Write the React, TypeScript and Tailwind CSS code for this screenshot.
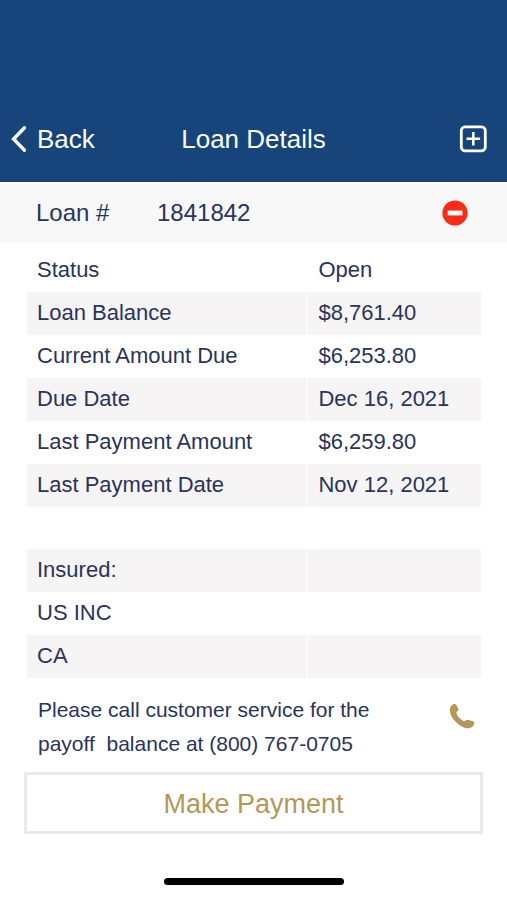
interface DetailRow {
	label: string;
	value?: string;
}

const loanRows: DetailRow[] = [
	{ label: "Status", value: "Open" },
	{ label: "Loan Balance", value: "$8,761.40" },
	{ label: "Current Amount Due", value: "$6,253.80" },
	{ label: "Due Date", value: "Dec 16, 2021" },
	{ label: "Last Payment Amount", value: "$6,259.80" },
	{ label: "Last Payment Date", value: "Nov 12, 2021" },
];

const insuredRows: DetailRow[] = [
	{ label: "Insured:" },
	{ label: "US INC" },
	{ label: "CA" },
];

function IconBack() {
	return (
		<svg width="16" height="28" viewBox="0 0 16 28" fill="none" aria-hidden="true">
			<path
				d="M14.5 2.8 3.6 14 14.5 25.2"
				stroke="currentColor"
				strokeWidth="3.4"
				strokeLinecap="round"
			/>
		</svg>
	);
}

function IconAddBox() {
	return (
		<svg width="28" height="28" viewBox="0 0 28 28" fill="none" aria-hidden="true">
			<rect x="2.3" y="1.8" width="24" height="24" rx="3.8" stroke="currentColor" strokeWidth="2.8" />
			<path d="M14.3 7v13.6M7.5 13.8h13.6" stroke="currentColor" strokeWidth="2.6" />
		</svg>
	);
}

function IconRemove() {
	return (
		<svg width="26" height="26" viewBox="0 0 26 26" aria-hidden="true">
			<circle cx="13" cy="13" r="12.6" fill="#fa2b17" />
			<rect x="5.6" y="10.6" width="14.8" height="4.8" fill="#fff" />
		</svg>
	);
}

function IconPhone() {
	return (
		<svg width="26" height="26" viewBox="0 0 26 26" fill="currentColor" aria-hidden="true">
			<path d="M2.4 2.8C3.6 1.4 5.3.7 6.3 1.1c1 .4 1.4 1.7 2.2 3.1.9 1.500 1.300 2.200.7 3.100-.5.8-1.500 1.100-1.700 2-.3 1.500.9 3.400 2.600 5.300 1.700 1.900 3.500 3.400 5 3.500 1 .1 1.500-.9 2.500-1.200.9-.3 1.700-.1 3 .4 1.800.6 3.800.9 4.500 1.800.7 1-.1 2.900-1.500 4.300-1.600 1.600-4.600 2.300-7.600 1.500-3.400-.9-7.200-3.500-10.100-6.800C3.200 15 1.200 11.300.9 8.200.7 6 1.200 4.200 2.400 2.800Z" />
		</svg>
	);
}

function DetailTable({
	label,
	rows,
	stripe,
}: {
	label: string;
	rows: DetailRow[];
	stripe: "odd" | "even";
}) {
	return (
		<table
			aria-label={label}
			className="w-full table-fixed border-separate border-spacing-0 text-[22px] leading-7"
		>
			<tbody>
				{rows.map((row) => (
					<tr
						key={row.label}
						className={
							stripe === "odd"
								? "h-[43px] odd:bg-[#f6f4f5]"
								: "h-[43px] even:bg-[#f6f4f5]"
						}
					>
						<th
							scope="row"
							className="w-[62%] border-r-2 border-white/60 pb-0.5 pl-2.5 text-left font-normal whitespace-nowrap"
						>
							{row.label}
						</th>
						<td className="pb-0.5 pl-2.5 whitespace-nowrap">{row.value}</td>
					</tr>
				))}
			</tbody>
		</table>
	);
}

export default function App() {
	return (
		<div className="min-h-screen bg-white font-['Liberation_Sans',Arial,sans-serif] text-[#2a335c]">
			<header className="bg-[#17457b] pt-24 text-white">
				<div className="grid h-[86px] grid-cols-[1fr_auto_1fr] items-center text-[26px] leading-8">
					<button type="button" className="flex items-center gap-[11px] justify-self-start pl-2.5">
						<IconBack />
						Back
					</button>
					<h1>Loan Details</h1>
					<button type="button" aria-label="Add loan" className="justify-self-end pr-5">
						<IconAddBox />
					</button>
				</div>
			</header>

			<main>
				<section className="mt-0.5 flex h-[59px] items-center bg-[#f8f8f8] pr-[39px] pb-0.5 pl-9 text-2xl">
					<span className="w-[121px]">Loan #</span>
					<span className="grow">1841842</span>
					<button type="button" aria-label="Remove loan">
						<IconRemove />
					</button>
				</section>

				<div className="mt-1.5 flex flex-col gap-[42px] pr-[26px] pl-[27px]">
					<DetailTable label="Loan" rows={loanRows} stripe="even" />
					<DetailTable label="Insured" rows={insuredRows} stripe="odd" />
				</div>

				<div className="mt-[15px] flex items-start justify-between pr-8 pl-[38px]">
					<p className="text-[21px] leading-[34px] whitespace-pre">
						{"Please call customer service for the\npayoff  balance at (800) 767-0705"}
					</p>
					<a href="tel:8007670705" aria-label="Call customer service" className="mt-2.5 text-[#b3985a]">
						<IconPhone />
					</a>
				</div>

				<div className="mt-[11px] px-6">
					<button
						type="button"
						className="h-[62px] w-full border-3 border-[#eaeaea] pt-0.5 text-[27px] leading-8 text-[#b3985a]"
					>
						Make Payment
					</button>
				</div>
			</main>

			<div className="mx-auto mt-11 h-[7px] w-[180px] rounded-full bg-black" />
		</div>
	);
}
